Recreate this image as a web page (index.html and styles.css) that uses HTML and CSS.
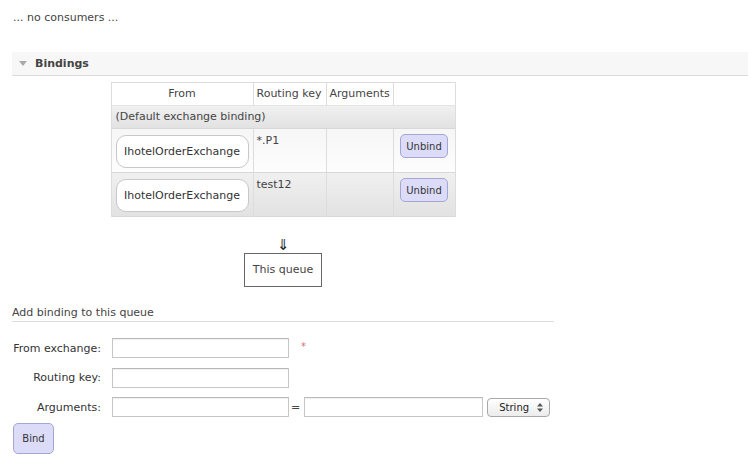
FILE: index.html
```html
<!DOCTYPE html>
<html>
<head>
<meta charset="utf-8">
<link rel="stylesheet" href="styles.css">
</head>
<body>
<p class="empty">... no consumers ...</p>

<div class="section">
  <h2 class="section-title"><span class="tri"></span>Bindings</h2>
  <div class="hider">
    <div class="bindings-wrapper">
      <table class="list">
        <thead>
          <tr>
            <th class="c-from">From</th>
            <th class="c-key">Routing key</th>
            <th class="c-args">Arguments</th>
            <th class="c-act"></th>
          </tr>
        </thead>
        <tbody>
          <tr class="alt1"><td colspan="4" class="default">(Default exchange binding)</td></tr>
          <tr class="alt2">
            <td class="from"><span class="exchange">IhotelOrderExchange</span></td>
            <td class="plain">*.P1</td>
            <td class="plain"></td>
            <td class="act"><button class="btn unbind">Unbind</button></td>
          </tr>
          <tr class="alt1">
            <td class="from"><span class="exchange">IhotelOrderExchange</span></td>
            <td class="plain">test12</td>
            <td class="plain"></td>
            <td class="act"><button class="btn unbind">Unbind</button></td>
          </tr>
        </tbody>
      </table>
      <p class="arrow">&#8659;&#65038;</p>
      <span class="queue">This queue</span>
    </div>

    <h3 class="subtitle">Add binding to this queue</h3>
    <form class="bind-form">
      <label class="lbl">From exchange:</label>
      <div class="field"><input class="text" type="text"><span class="mand">*</span></div>
      <label class="lbl">Routing key:</label>
      <div class="field"><input class="text" type="text"></div>
      <label class="lbl">Arguments:</label>
      <div class="field">
        <input class="text" type="text">
        <span class="eq">=</span>
        <input class="text wide" type="text">
        <span class="select">String<svg class="updown" width="6" height="9" viewBox="0 0 6 9"><path d="M3 0 L6 3.5 L0 3.5 Z M0 5.5 L6 5.5 L3 9 Z" fill="#555"/></svg></span>
      </div>
    </form>
    <button class="btn bind">Bind</button>
  </div>
</div>
</body>
</html>
```

FILE: styles.css
```css
* { box-sizing: border-box; }

body {
  margin: 0;
  padding: 11px 0 0 12px;
  font-family: "DejaVu Sans", Verdana, sans-serif;
  font-size: 11px;
  line-height: 13px;
  color: #444;
  background: #fff;
}

.empty {
  margin: 0 0 0 1px;
}

.section-title {
  margin: 28px 0 0;
  height: 24px;
  padding-left: 7px;
  display: flex;
  align-items: center;
  gap: 8px;
  background: #f7f7f7;
  border-bottom: 1px solid #dcdcdc;
  font-size: 11px;
  font-weight: bold;
  color: #444;
}

.tri {
  width: 0;
  height: 0;
  border-left: 4px solid transparent;
  border-right: 4px solid transparent;
  border-top: 5px solid #aaa;
}

.bindings-wrapper {
  width: 542px;
  text-align: center;
}

.list {
  width: 345px;
  table-layout: fixed;
  margin: 6px auto 0;
  border-collapse: separate;
  border-spacing: 0;
  border-top: 1px solid #ddd;
  border-left: 1px solid #ddd;
  text-align: left;
}

.list th,
.list td {
  border-right: 1px solid #ddd;
  border-bottom: 1px solid #d8d8d8;
  vertical-align: top;
  padding: 4px;
}

.list th {
  font-weight: normal;
  text-align: center;
  white-space: nowrap;
  background: #fff;
  padding: 4px 3px 5px;
  border-bottom-color: #e4e4e4;
}

.c-from { width: 142px; }
.c-key { width: 73px; }
.c-args { width: 67px; }
.c-act { width: 62px; }

.list th.c-key,
.list th.c-args { text-align: left; }

.list td.default {
  padding: 4px 4px 5px;
}

.alt1 td {
  background: linear-gradient(to bottom, #f0f0f0, #e2e2e2);
}

.alt2 td {
  background: linear-gradient(to bottom, #f6f6f6, #fdfdfd);
}

.list td.from {
  padding: 6px 4px 4px;
}

.list td.act {
  padding: 5px 4px 4px;
  text-align: center;
}

.list td.plain {
  padding: 5px 3px 4px;
}

.exchange {
  display: block;
  padding: 9px 4px;
  background: #fff;
  border: 1px solid #c8c8c8;
  border-radius: 10px;
  text-align: center;
  color: #333;
}

.btn {
  font-family: "DejaVu Sans", Verdana, sans-serif;
  font-size: 10px;
  color: #333;
  background: #dcdcf8;
  border: 1px solid #a6a6d6;
  border-radius: 5px;
  padding: 0;
  cursor: pointer;
}

.unbind {
  width: 48px;
  height: 24px;
}

.arrow {
  margin: 20px 0 0;
  font-family: "DejaVu Sans", sans-serif;
  font-size: 15px;
  line-height: 16px;
  color: #222;
}

.queue {
  display: inline-block;
  padding: 10px 8px;
  line-height: 12px;
  border: 1px solid #666;
  background: #fff;
  color: #444;
}

.subtitle {
  width: 542px;
  margin: 19px 0 0;
  padding-bottom: 2px;
  border-bottom: 1px solid #ddd;
  font-size: 11px;
  font-weight: normal;
  color: #444;
}

.bind-form {
  margin-top: 16px;
  display: grid;
  grid-template-columns: 92px auto;
  column-gap: 8px;
  row-gap: 9.5px;
  align-items: center;
  justify-content: start;
}

.lbl {
  text-align: right;
  padding-right: 3px;
  color: #333;
}

.field {
  display: flex;
  align-items: center;
}

.text {
  width: 177px;
  height: 20px;
  margin: 0;
  border: 1px solid #c6c6c6;
  border-top-color: #b8b8b8;
  box-shadow: inset 0 1px 1px rgba(0, 0, 0, 0.06);
  background: #fff;
  font: inherit;
}

.text.wide {
  width: 179px;
}

.mand {
  margin-left: 12px;
  margin-top: -4px;
  color: #e07070;
  font-size: 10px;
}

.eq {
  margin: 0 4px 0 2px;
  color: #444;
}

.select {
  position: relative;
  margin-left: 4px;
  width: 63px;
  height: 19px;
  display: inline-flex;
  align-items: center;
  padding-left: 11px;
  border: 1px solid #a8a8a8;
  border-radius: 4px;
  background: linear-gradient(to bottom, #ffffff, #ececec);
  color: #222;
  font-size: 10px;
}

.updown {
  position: absolute;
  right: 6px;
  top: 4px;
}

.bind {
  display: block;
  margin: 6px 0 0 1px;
  width: 41px;
  height: 31px;
}
```
